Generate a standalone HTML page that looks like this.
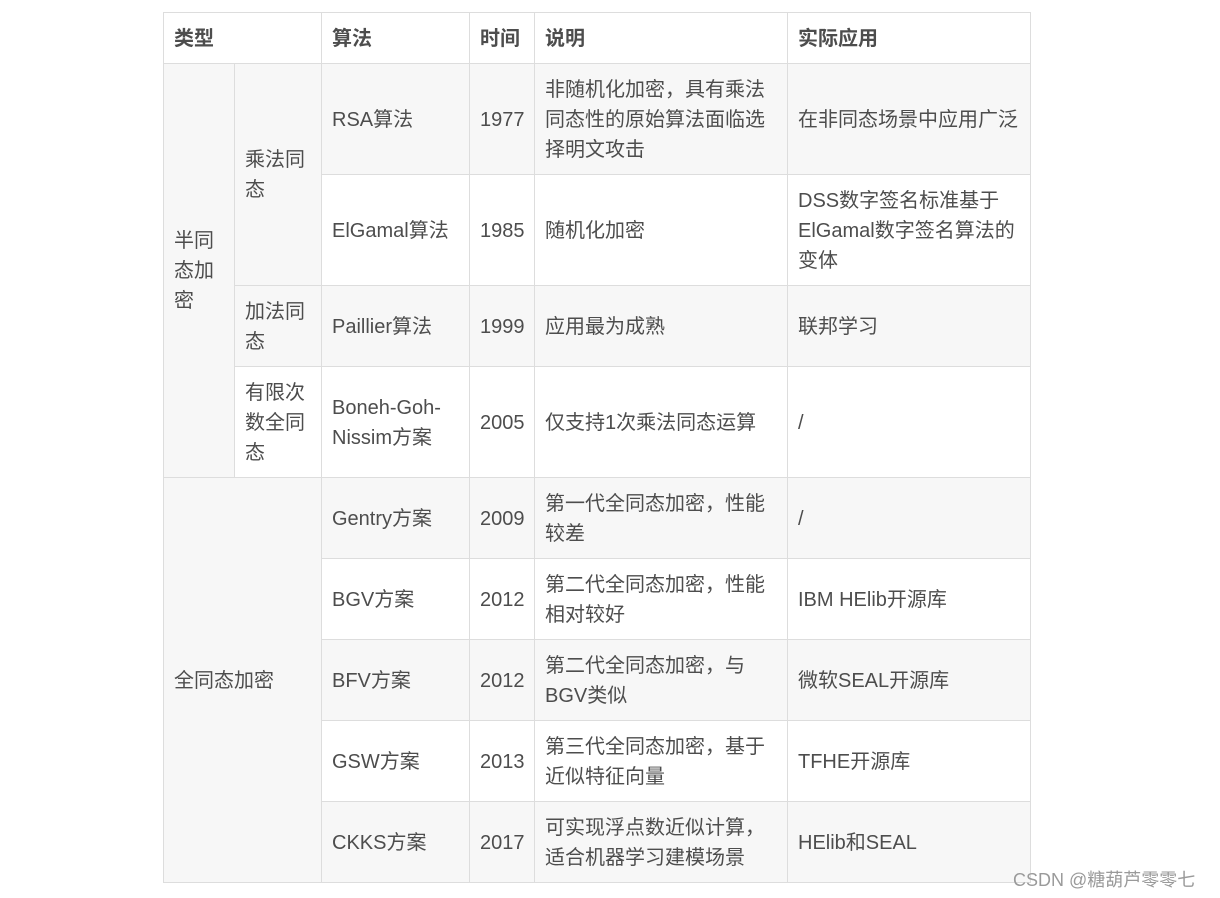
<!DOCTYPE html>
<html><head><meta charset="utf-8"><style>
html,body{margin:0;padding:0;background:#fff;width:1220px;height:898px;overflow:hidden;position:relative}
table{position:absolute;left:163px;top:12px;border-collapse:collapse;table-layout:fixed;width:867px;
font-family:"Liberation Sans","Noto Sans CJK SC",sans-serif;font-size:20px;line-height:30px;color:#4d4d4d}
td,th{border:1px solid #ddd;padding:1px 10px 0 10px;vertical-align:middle;text-align:left;word-break:normal;overflow-wrap:break-word}
th{font-weight:bold;height:49px;background:#fff}
.g{background:#f7f7f7}
.y{white-space:nowrap;padding-right:0;overflow:visible}
.wm{position:absolute;left:1013px;top:866px;font-family:"Liberation Sans","Noto Sans CJK SC",sans-serif;font-size:18px;color:#9a9a9a;text-shadow:0 0 1px #fff}
</style></head><body>
<table>
<colgroup><col style="width:71px"><col style="width:87px"><col style="width:148px"><col style="width:65px"><col style="width:253px"><col style="width:243px"></colgroup>
<tr><th colspan="2">类型</th><th>算法</th><th>时间</th><th>说明</th><th>实际应用</th></tr>
<tr style="height:111px"><td rowspan="4" class="g">半同态加密</td><td rowspan="2" class="g">乘法同态</td><td class="g">RSA算法</td><td class="g y">1977</td><td class="g">非随机化加密，具有乘法同态性的原始算法面临选择明文攻击</td><td class="g">在非同态场景中应用广泛</td></tr>
<tr style="height:111px"><td>ElGamal算法</td><td class="y">1985</td><td>随机化加密</td><td>DSS数字签名标准基于 ElGamal数字签名算法的变体</td></tr>
<tr style="height:81px"><td class="g">加法同态</td><td class="g">Paillier算法</td><td class="g y">1999</td><td class="g">应用最为成熟</td><td class="g">联邦学习</td></tr>
<tr style="height:111px"><td>有限次数全同态</td><td>Boneh-Goh-Nissim方案</td><td class="y">2005</td><td>仅支持1次乘法同态运算</td><td>/</td></tr>
<tr style="height:81px"><td rowspan="5" colspan="2" class="g">全同态加密</td><td class="g">Gentry方案</td><td class="g y">2009</td><td class="g">第一代全同态加密，性能较差</td><td class="g">/</td></tr>
<tr style="height:81px"><td>BGV方案</td><td class="y">2012</td><td>第二代全同态加密，性能相对较好</td><td>IBM HElib开源库</td></tr>
<tr style="height:81px"><td class="g">BFV方案</td><td class="g y">2012</td><td class="g">第二代全同态加密，与 BGV类似</td><td class="g">微软SEAL开源库</td></tr>
<tr style="height:81px"><td>GSW方案</td><td class="y">2013</td><td>第三代全同态加密，基于近似特征向量</td><td>TFHE开源库</td></tr>
<tr style="height:81px"><td class="g">CKKS方案</td><td class="g y">2017</td><td class="g">可实现浮点数近似计算，适合机器学习建模场景</td><td class="g">HElib和SEAL</td></tr>
</table>
<div class="wm">CSDN @糖葫芦零零七</div>
</body></html>
